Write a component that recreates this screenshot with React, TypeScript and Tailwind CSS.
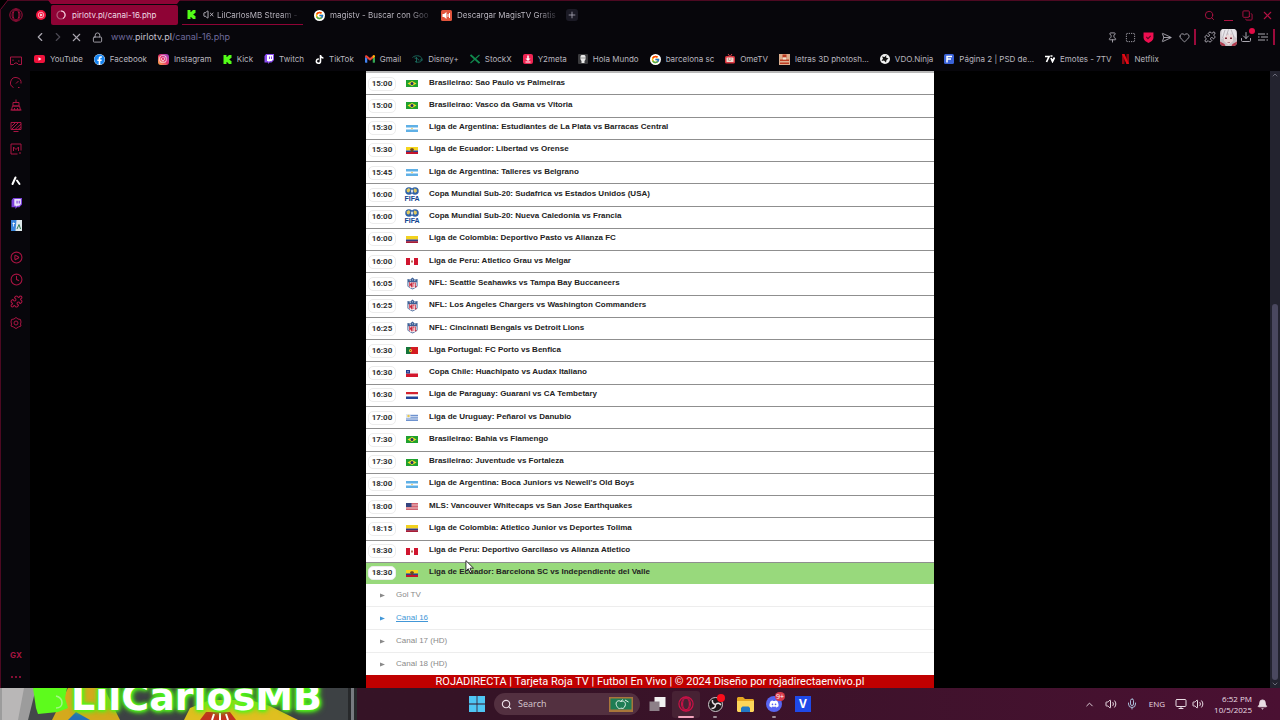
import type { ReactNode } from 'react';
import {
  Bell,
  ChevronDown,
  ChevronLeft,
  ChevronRight,
  ChevronUp,
  CirclePlay,
  Clock,
  Copy,
  Download,
  Heart,
  Lock,
  Mic,
  Monitor,
  Pin,
  Plus,
  Puzzle,
  Search,
  SendHorizontal,
  SquareDashed,
  Volume2,
  VolumeX,
  X,
} from 'lucide-react';
import { FaDiscord, FaFacebook, FaInstagram, FaTiktok, FaTwitch } from 'react-icons/fa';
import { FcGoogle } from 'react-icons/fc';

const MATCHES = [
  { time: '15:00', flag: 'br', title: 'Brasileirao: Sao Paulo vs Palmeiras' },
  { time: '15:00', flag: 'br', title: 'Brasileirao: Vasco da Gama vs Vitoria' },
  { time: '15:30', flag: 'ar', title: 'Liga de Argentina: Estudiantes de La Plata vs Barracas Central' },
  { time: '15:30', flag: 'ec', title: 'Liga de Ecuador: Libertad vs Orense' },
  { time: '15:45', flag: 'ar', title: 'Liga de Argentina: Talleres vs Belgrano' },
  { time: '16:00', flag: 'fifa', title: 'Copa Mundial Sub-20: Sudafrica vs Estados Unidos (USA)' },
  { time: '16:00', flag: 'fifa', title: 'Copa Mundial Sub-20: Nueva Caledonia vs Francia' },
  { time: '16:00', flag: 'co', title: 'Liga de Colombia: Deportivo Pasto vs Alianza FC' },
  { time: '16:00', flag: 'pe', title: 'Liga de Peru: Atletico Grau vs Melgar' },
  { time: '16:05', flag: 'nfl', title: 'NFL: Seattle Seahawks vs Tampa Bay Buccaneers' },
  { time: '16:25', flag: 'nfl', title: 'NFL: Los Angeles Chargers vs Washington Commanders' },
  { time: '16:25', flag: 'nfl', title: 'NFL: Cincinnati Bengals vs Detroit Lions' },
  { time: '16:30', flag: 'pt', title: 'Liga Portugal: FC Porto vs Benfica' },
  { time: '16:30', flag: 'cl', title: 'Copa Chile: Huachipato vs Audax Italiano' },
  { time: '16:30', flag: 'py', title: 'Liga de Paraguay: Guarani vs CA Tembetary' },
  { time: '17:00', flag: 'uy', title: 'Liga de Uruguay: Peñarol vs Danubio' },
  { time: '17:30', flag: 'br', title: 'Brasileirao: Bahia vs Flamengo' },
  { time: '17:30', flag: 'br', title: 'Brasileirao: Juventude vs Fortaleza' },
  { time: '18:00', flag: 'ar', title: "Liga de Argentina: Boca Juniors vs Newell's Old Boys" },
  { time: '18:00', flag: 'us', title: 'MLS: Vancouver Whitecaps vs San Jose Earthquakes' },
  { time: '18:15', flag: 'co', title: 'Liga de Colombia: Atletico Junior vs Deportes Tolima' },
  { time: '18:30', flag: 'pe', title: 'Liga de Peru: Deportivo Garcilaso vs Alianza Atletico' },
  { time: '18:30', flag: 'ec', title: 'Liga de Ecuador: Barcelona SC vs Independiente del Valle', isOpen: true },
];

const CHANNELS = [
  { name: 'Gol TV' },
  { name: 'Canal 16', isHovered: true },
  { name: 'Canal 17 (HD)' },
  { name: 'Canal 18 (HD)' },
];

const FLAGS: Record<string, ReactNode> = {
  br: (
    <>
      <path fill="#1fa12e" d="M0 0h24v14H0z" />
      <path fill="#f4e02a" d="M12 2l9 5-9 5-9-5z" />
      <circle cx="12" cy="7" r="3" fill="#1c2f6b" />
    </>
  ),
  ar: (
    <>
      <path fill="#5fb0e6" d="M0 0h24v14H0z" />
      <path fill="#fff" d="M0 5h24v4H0z" />
      <circle cx="12" cy="7" r="1.6" fill="#e8c65a" />
    </>
  ),
  ec: (
    <>
      <path fill="#f5d51d" d="M0 0h24v7H0z" />
      <path fill="#2b3f8f" d="M0 7h24v4H0z" />
      <path fill="#c4142c" d="M0 10h24v4H0z" />
      <path fill="#6b4a22" d="M8 4l4-2 4 2-2 6h-4z" />
    </>
  ),
  co: (
    <>
      <path fill="#f2d21f" d="M0 0h24v7H0z" />
      <path fill="#343a7d" d="M0 7h24v4H0z" />
      <path fill="#a81c36" d="M0 10.5h24V14H0z" />
    </>
  ),
  pe: (
    <>
      <path fill="#fff" d="M0 0h24v14H0z" />
      <path fill="#d0152f" d="M0 0h8v14H0zM16 0h8v14h-8z" />
      <path fill="#b9705a" d="M10 5h4v4h-4z" />
    </>
  ),
  pt: (
    <>
      <path fill="#d41b22" d="M0 0h24v14H0z" />
      <path fill="#15753a" d="M0 0h9v14H0z" />
      <circle cx="9" cy="7" r="3" fill="#ecd03a" />
      <path fill="#d41b22" d="M8 6h2v2H8z" />
    </>
  ),
  cl: (
    <>
      <path fill="#f4f4f6" d="M0 0h24v7H0z" />
      <path fill="#d3172d" d="M0 7h24v7H0z" />
      <path fill="#1e3c93" d="M0 0h8v7H0z" />
      <path fill="#fff" d="M3 2.5h2v2H3z" />
    </>
  ),
  py: (
    <>
      <path fill="#d22330" d="M0 0h24v5H0z" />
      <path fill="#fff" d="M0 5h24v4H0z" />
      <path fill="#23479b" d="M0 9h24v5H0z" />
    </>
  ),
  uy: (
    <>
      <path fill="#dfe7f5" d="M0 0h24v14H0z" />
      <path stroke="#6d92cf" strokeWidth="2" d="M9 3h15M9 6.5h15M0 10h24M0 13h24" />
      <circle cx="5" cy="4" r="2.4" fill="#e9c84a" />
    </>
  ),
  us: (
    <>
      <path fill="#eec3c8" d="M0 0h24v14H0z" />
      <path stroke="#c43a4b" strokeWidth="1.4" d="M0 1h24M0 4h24M0 7h24M0 10h24M0 13h24" />
      <path fill="#33447f" d="M0 0h11v8H0z" />
    </>
  ),
};

function Flag({ code }: { code: string }) {
  if (code === 'fifa') {
    return (
      <svg viewBox="0 0 28 28" className="size-[14px] overflow-visible">
        <circle cx="8" cy="8" r="7.5" fill="#2f62a8" />
        <circle cx="20" cy="8" r="7.5" fill="#2f62a8" />
        <path fill="#dfc860" d="M3 5l5-3 3 4-3 5-4-1zM18 3l5 1 1 5-4 3-3-4z" />
        <path fill="#fff" d="M12 8l2-4 2 4-2 5z" />
        <text x="14" y="28" textAnchor="middle" fontSize="14" fontWeight="900" fill="#0f4590">
          FIFA
        </text>
      </svg>
    );
  }
  if (code === 'nfl') {
    return (
      <svg viewBox="0 0 24 28" className="h-[13px] w-[11px]">
        <path fill="#3d6096" d="M1 4l6 1 5-4 5 4 6-1v16l-5 4-6 3-6-3-5-4z" />
        <path fill="#fff" d="M3 11h18v9l-4 3-5 2-5-2-4-3z" />
        <path fill="#fff" d="M6 6h2v2H6zM11 5h2v2h-2zM16 6h2v2h-2z" />
        <path stroke="#c8273c" strokeWidth="2.2" fill="none" d="M6 21v-8l4 7v-8M13 22v-9h3M18 12v9h3" />
      </svg>
    );
  }
  return (
    <svg viewBox="0 0 24 14" preserveAspectRatio="none" className="mt-[2px] h-[7px] w-[12px]">
      {FLAGS[code]}
    </svg>
  );
}

function KickIcon() {
  return (
    <svg viewBox="0 0 18 18" className="size-[9px] shrink-0" fill="#53fc18">
      <path d="M1 0h6v4h2V2h2V0h6v6h-2v2h-2v2h2v2h2v6h-6v-2H9v-2H7v4H1z" />
    </svg>
  );
}

function OperaIcon({ className }: { className?: string }) {
  return (
    <svg viewBox="0 0 28 28" className={className} fill="none" stroke="currentColor">
      <circle cx="14" cy="14" r="12.4" strokeWidth="2" />
      <ellipse cx="14" cy="14" rx="6" ry="10" strokeWidth="2" />
      <path strokeWidth="1.6" d="M14 1.6c-5 2-8 7-8 12.4s3 10.4 8 12.4M14 1.6c5 2 8 7 8 12.4s-3 10.4-8 12.4" />
    </svg>
  );
}

const BOOKMARKS: { label: string; icon: ReactNode }[] = [
  {
    label: 'YouTube',
    icon: (
      <svg viewBox="0 0 22 16" className="h-[8px] w-[11px]">
        <rect width="22" height="16" rx="4" fill="#f0123c" />
        <path fill="#fff" d="M9 4.5l6 3.5-6 3.5z" />
      </svg>
    ),
  },
  { label: 'Facebook', icon: <FaFacebook className="size-[11px] rounded-full bg-white text-[#1583f0]" /> },
  {
    label: 'Instagram',
    icon: (
      <span className="flex size-[11px] items-center justify-center rounded-[3px] bg-linear-to-tr from-[#fdb03c] via-[#e52d6a] to-[#9436c9]">
        <FaInstagram className="size-[8px] text-white" />
      </span>
    ),
  },
  { label: 'Kick', icon: <KickIcon /> },
  {
    label: 'Twitch',
    icon: (
      <svg viewBox="0 0 20 20" className="size-[10px]">
        <path fill="#8b4df0" d="M4 0h16v12l-5 5h-4l-3 3v-3H1V4z" />
        <path fill="#fff" d="M6 2h12v9l-3 3h-3l-3 2v-2H6z" />
        <path stroke="#8b4df0" strokeWidth="2" d="M11 5v5M15 5v5" />
      </svg>
    ),
  },
  { label: 'TikTok', icon: <FaTiktok className="size-[9px] text-white" /> },
  {
    label: 'Gmail',
    icon: (
      <svg viewBox="0 0 22 16" className="h-[8px] w-[10px]">
        <path fill="#4285f4" d="M0 3l5 4v9H1l-1-1z" />
        <path fill="#34a853" d="M17 7l5-4v12l-1 1h-4z" />
        <path fill="#ea4335" d="M0 3C0 0 3-1 5 1l6 5 6-5c2-2 5-1 5 2L11 12z" />
        <path fill="#fbbc04" d="M17 1c2-2 5-1 5 2l-5 4z" />
      </svg>
    ),
  },
  {
    label: 'Disney+',
    icon: (
      <svg viewBox="0 0 22 18" className="h-[9px] w-[11px]" fill="none" stroke="#1c6f62" strokeWidth="1.8">
        <path d="M1 5C6 0 18 0 20 8c1 6-8 8-14 5M5 6c5 1 9 2 9 5M9 4v11M16 10h5" />
      </svg>
    ),
  },
  {
    label: 'StockX',
    icon: (
      <svg viewBox="0 0 20 20" className="size-[10px]" stroke="#118a4e" strokeWidth="3.6">
        <path d="M1 2l18 16" />
        <path strokeWidth="2.4" d="M19 2L1 18" />
      </svg>
    ),
  },
  {
    label: 'Y2meta',
    icon: (
      <svg viewBox="0 0 20 20" className="size-[10px]">
        <rect width="20" height="20" rx="4" fill="#ef2452" />
        <path fill="#fff" d="M8.5 3h3v6H15l-5 5-5-5h3.5zM5 15h10v2H5z" />
      </svg>
    ),
  },
  {
    label: 'Hola Mundo',
    icon: (
      <svg viewBox="0 0 20 20" className="size-[10px]">
        <rect width="20" height="20" rx="2" fill="#3a3a3d" />
        <path fill="#e8e8e8" d="M5 4l2-2h6l2 2v7l-2 3v4H7v-4l-2-3z" />
        <path fill="#444" d="M7 7h2v2H7zM11 7h2v2h-2z" />
      </svg>
    ),
  },
  { label: 'barcelona sc', icon: <FcGoogle className="size-[11px] rounded-full bg-white p-px" /> },
  {
    label: 'OmeTV',
    icon: (
      <svg viewBox="0 0 20 20" className="size-[10px]">
        <path stroke="#d8444c" strokeWidth="2" d="M6 0l4 5 4-5" fill="none" />
        <rect y="4" width="20" height="15" rx="3" fill="#d8343e" />
        <rect x="3" y="7" width="14" height="9" rx="1" fill="#f1d9cf" />
        <path fill="#8c6a58" d="M6 9h2v2H6zM11 9h2v2h-2zM7 13h5v1H7z" />
      </svg>
    ),
  },
  {
    label: 'letras 3D photosh...',
    icon: (
      <svg viewBox="0 0 22 22" className="size-[11px]">
        <path fill="#dcae8e" d="M0 0h22v22H0z" />
        <path fill="#bd3b22" d="M7 1h8v6H7zM2 11h18v3H2zM2 17h18v3H2z" />
        <path fill="#f2e3d2" d="M8 7h6v4H8z" />
      </svg>
    ),
  },
  {
    label: 'VDO.Ninja',
    icon: (
      <svg viewBox="0 0 20 20" className="size-[10px]">
        <circle cx="10" cy="10" r="10" fill="#f2f2f2" />
        <path fill="#111" d="M13 2l-1 5 5 2-4 3-1 5-4-4-5 1 3-5-2-4 5 1z" />
      </svg>
    ),
  },
  {
    label: 'Página 2 | PSD de...',
    icon: (
      <svg viewBox="0 0 20 20" className="size-[10px]">
        <rect width="20" height="20" rx="3" fill="#3a62d8" />
        <path stroke="#fff" strokeWidth="3" fill="none" d="M6 17V5h10M6 10h8" />
      </svg>
    ),
  },
  {
    label: 'Emotes - 7TV',
    icon: (
      <svg viewBox="0 0 20 16" className="h-[8px] w-[10px]" fill="none" stroke="#fff" strokeWidth="3.4">
        <path d="M0 3h8L3 14M12 6l3 7 4-8M11 2h4" />
      </svg>
    ),
  },
  {
    label: 'Netflix',
    icon: (
      <svg viewBox="0 0 14 20" className="h-[10px] w-[7px]">
        <path fill="#8f0710" d="M0 0h5v20H0zM9 0h5v20H9z" />
        <path fill="#e50914" d="M0 0h5l9 20H9z" />
      </svg>
    ),
  },
];

/* GX corner panel icons */
function SideIcon({ name }: { name: string }) {
  return (
    <svg viewBox="0 0 24 24" className="size-[12px]" fill="none" stroke="currentColor" strokeWidth="2">
      {name === 'corner' && <path d="M1 4h22v15h-6l-3-3h-4l-3 3H1zM6 9v3M16 12h3" />}
      {name === 'speed' && <path d="M7 21A10.5 10.5 0 1 1 22 13M12 13l5-5M16 21h3" />}
      {name === 'cleaner' && <path d="M12 1v5M6 7h12v7H6zM3 22l2-8h14l2 8zM1 22h22M9 18v4M15 18v4" />}
      {name === 'mods' && <path d="M2 3h20v14H2zM7 21h10M3 11l8-8M4 16L17 3M10 17L22 6M16 17l6-5" />}
      {name === 'market' && <path d="M15 22H2V2h20v13M7 16V8l5 5 5-5v8M18 20h4" />}
      {name === 'settings' && (
        <>
          <path d="M12 1l4 3 5 1 1 5-1 4 1 4-5 2-5 3-5-3-5-2 1-4-1-4 1-5 5-1z" />
          <circle cx="12" cy="12" r="4" />
        </>
      )}
    </svg>
  );
}

const SIDE_TOOLS = [
  { label: 'GX Corner', icon: <SideIcon name="corner" /> },
  { label: 'GX Control', icon: <SideIcon name="speed" /> },
  { label: 'GX Cleaner', icon: <SideIcon name="cleaner" /> },
  { label: 'Mods', icon: <SideIcon name="mods" /> },
  { label: 'Market', icon: <SideIcon name="market" /> },
];

const SIDE_APPS = [
  {
    label: 'Aria',
    icon: (
      <svg viewBox="0 0 20 20" className="size-[10px]" stroke="#fff" strokeWidth="4" strokeLinecap="round">
        <path d="M9 3L3 16M12 9l5 7" />
      </svg>
    ),
  },
  {
    label: 'Twitch',
    icon: (
      <svg viewBox="0 0 20 20" className="size-[11px]">
        <path fill="#7c40dc" d="M4 0h16v12l-5 5h-4l-3 3v-3H1V4z" />
        <path fill="#e9e0fa" d="M6 2h12v9l-3 3h-3l-3 2v-2H6z" />
        <path stroke="#7c40dc" strokeWidth="2" d="M11 5v5M15 5v5" />
      </svg>
    ),
  },
  {
    label: 'Translate',
    icon: (
      <svg viewBox="0 0 22 22" className="size-[11px]">
        <path fill="#3b86dc" d="M0 0h12v22H0z" />
        <path fill="#dfe9ee" d="M11 0h11v22H9z" />
        <path stroke="#fff" strokeWidth="1.6" fill="none" d="M3 7h5M5 5v8" />
        <path stroke="#2d7a52" strokeWidth="2" fill="none" d="M12 18l4-9 3 9" />
      </svg>
    ),
  },
];

const SIDE_LINKS = [
  { label: 'Player', icon: <CirclePlay size={13} strokeWidth={2} /> },
  { label: 'History', icon: <Clock size={13} strokeWidth={2} /> },
  { label: 'Extensions', icon: <Puzzle size={13} strokeWidth={2} /> },
  { label: 'Settings', icon: <SideIcon name="settings" /> },
];

function SideGroup({ items }: { items: { label: string; icon: ReactNode }[] }) {
  return (
    <div className="flex flex-col">
      {items.map((item) => (
        <button key={item.label} type="button" aria-label={item.label} className="flex h-[22px] items-center justify-center">
          {item.icon}
        </button>
      ))}
    </div>
  );
}

function TabBar() {
  return (
    <div className="relative flex h-[26px] items-center">
      <svg viewBox="0 0 132 4" className="absolute left-[48px] top-0 h-[4px] w-[132px]">
        <path fill="#8e0335" d="M0 0h132l-3 4H3z" />
      </svg>
      <div className="flex w-[30px] justify-center pl-[2px] pt-[4px] text-[#a30f3d]">
        <OperaIcon className="size-[14px]" />
      </div>
      <button type="button" aria-label="YouTube Music" className="flex w-[21px] justify-center pt-[4px]">
        <svg viewBox="0 0 20 20" className="size-[10px]">
          <circle cx="10" cy="10" r="10" fill="#f3133d" />
          <circle cx="10" cy="10" r="5.5" fill="none" stroke="#fff" strokeWidth="1.2" />
          <path fill="#fff" d="M8.5 7l5 3-5 3z" />
        </svg>
      </button>
      <div className="flex min-w-0 items-center gap-[4px] pt-[4px] text-[8px] leading-[12px] text-[#c3bfc9]">
        <button type="button" className="flex h-[20px] w-[127px] items-center gap-[6px] rounded-[2px] bg-[#8e0335] px-[5px] text-[#f0dbe4]">
          <svg viewBox="0 0 20 20" className="size-[10px]" fill="none" strokeWidth="2.4">
            <circle cx="10" cy="10" r="8" stroke="#b35a7c" />
            <path d="M10 2a8 8 0 0 1 4 15" stroke="#f2c6d6" />
          </svg>
          pirlotv.pl/canal-16.php
        </button>
        <button type="button" className="flex h-[20px] w-[121px] items-center border-b border-[#8e0335] px-[5px]">
          <KickIcon />
          <VolumeX size={11} strokeWidth={2} className="ml-[7px] mr-[3px] shrink-0" />
          <span className="whitespace-nowrap bg-linear-to-r from-[#c3bfc9] from-80% to-[#33323a] bg-clip-text text-transparent">
            LilCarlosMB Stream -
          </span>
        </button>
        <button type="button" className="flex h-[20px] w-[124px] items-center gap-[5px] pl-[7px]">
          <FcGoogle className="size-[11px] shrink-0 rounded-full bg-white p-px" />
          <span className="whitespace-nowrap bg-linear-to-r from-[#c3bfc9] from-80% to-[#33323a] bg-clip-text text-transparent">
            magistv - Buscar con Goo
          </span>
        </button>
        <button type="button" className="flex h-[20px] w-[127px] items-center gap-[5px] pl-[6px]">
          <svg viewBox="0 0 22 22" className="size-[11px] shrink-0">
            <rect width="22" height="22" rx="3" fill="#e2543c" />
            <path fill="#fff" d="M3 8h3l5-4v14l-5-4H3zM13 8h2v6h-2zM16 6h2v10h-2z" />
          </svg>
          <span className="whitespace-nowrap bg-linear-to-r from-[#c3bfc9] from-80% to-[#33323a] bg-clip-text text-transparent">
            Descargar MagisTV Gratis
          </span>
        </button>
        <button type="button" aria-label="New tab" className="rounded-[3px] bg-[#1b1a25] p-px text-[#a9a6b4]">
          <Plus size={10} />
        </button>
      </div>
      <div className="ml-auto flex items-center gap-[8px] pr-[6px] pt-[4px] text-[#b01243]">
        <button type="button" aria-label="Search tabs">
          <Search size={11} />
        </button>
        <button type="button" aria-label="Minimize" className="flex h-[11px] w-[11px] items-end px-px">
          <span className="h-px w-full bg-[#b01243]" />
        </button>
        <button type="button" aria-label="Restore">
          <Copy size={11} className="-scale-x-100 rotate-90" />
        </button>
        <button type="button" aria-label="Close">
          <X size={13} />
        </button>
      </div>
    </div>
  );
}

function AddressBar() {
  return (
    <div className="flex h-[22px] items-center pl-[33px] text-[#aaa7b0]">
      <button type="button" aria-label="Back" className="flex w-[14px] justify-center">
        <ChevronLeft size={14} />
      </button>
      <button type="button" aria-label="Forward" className="ml-[4px] flex w-[14px] justify-center text-[#4b4953]">
        <ChevronRight size={14} />
      </button>
      <button type="button" aria-label="Stop" className="ml-[4px] flex w-[14px] justify-center">
        <X size={13} />
      </button>
      <Lock size={11} className="ml-[9px]" />
      <a href="#url" className="ml-[8px] text-[9px] leading-[12px] text-[#6f6a9c]">
        www.<span className="text-[#c6c3cf]">pirlotv.pl</span>/canal-16.php
      </a>
      <div className="ml-auto flex items-center">
        <div className="flex items-center gap-[7px]">
          <Pin size={11} />
          <SquareDashed size={11} />
          <svg viewBox="0 0 20 20" className="size-[11px]">
            <path fill="#ee0e50" d="M1 1h18v10c0 4-5 7-9 9-4-2-9-5-9-9z" />
            <path stroke="#55061f" strokeWidth="2" fill="none" d="M6 9l3 3 5-5" />
          </svg>
          <SendHorizontal size={11} />
          <Heart size={11} />
        </div>
        <span className="ml-[4px] h-[16px] w-[2px] bg-[#9b0a3b]" />
        <Puzzle size={12} className="ml-[8px]" />
        <svg viewBox="0 0 34 34" className="ml-[4px] size-[17px] rounded-[4px]">
          <path fill="#c9c3c8" d="M0 0h34v34H0z" />
          <path fill="#ecd9d9" d="M8 11h18v13l-9 8-9-8z" />
          <path fill="#e8e6ea" d="M3 0h28l2 18-7-4-4-6-3 7-3-8-5 8-8 5z" />
          <path stroke="#8f878f" strokeWidth="1" fill="none" d="M10 2L5 18M17 1l-4 12M22 1l6 15" />
          <path fill="#7a2c3c" d="M10 17h4v3h-4zM20 17h4v3h-4zM15 26h5v1h-5z" />
          <path fill="#b23b4e" d="M0 25l9 5 2 4H0zM34 25l-9 5-2 4h11z" />
        </svg>
        <span className="relative ml-[3px]">
          <Download size={12} />
          <span className="absolute -right-[3px] -top-[3px] size-[6px] rounded-full bg-[#e20c46]" />
        </span>
        <svg viewBox="0 0 20 20" className="ml-[6px] size-[10px]" stroke="currentColor" strokeWidth="2">
          <path d="M0 4h14M17 4h3M0 10h3M6 10h14M0 16h14M17 16h3" />
        </svg>
        <span className="ml-[5px] mr-[5px] h-[16px] w-[2px] bg-[#9b0a3b]" />
      </div>
    </div>
  );
}

function MatchList() {
  return (
    <ul className="flex flex-1 flex-col border-t-2 border-[#b9b9b9]">
      {MATCHES.map((match, i) => (
        <li
          key={i}
          className={`flex min-h-0 flex-1 ${match.isOpen ? 'bg-[#98d97c]' : 'border-b border-[#8f8f8f] bg-white'}`}
        >
          <a href="#match" className="flex flex-1 items-center pb-[2px]">
            <span className="ml-[2px] mt-[2px] w-[28px] rounded-[5px] border border-[#ececec] bg-white text-center font-[Roboto,sans-serif] text-[8px] font-bold leading-[12px] text-[#333]">
              {match.time}
            </span>
            <span className="ml-[8px] flex w-[16px] justify-center">
              <Flag code={match.flag} />
            </span>
            <span className="ml-[9px] text-[8px] font-bold leading-[12px] text-[#222]">{match.title}</span>
          </a>
        </li>
      ))}
    </ul>
  );
}

function ChannelList() {
  return (
    <ul className="bg-white">
      {CHANNELS.map((channel) => (
        <li key={channel.name} className="border-b border-[#ededed] last:border-b-0">
          <a
            href="#channel"
            className={`flex h-[22px] items-center text-[8px] ${channel.isHovered ? 'text-[#4297d7]' : 'text-[#8a8a8a]'}`}
          >
            <svg viewBox="0 0 10 10" className="ml-[14px] mr-[11px] size-[5px]" fill="currentColor">
              <path d="M0 1l10 4-10 4z" />
            </svg>
            <span className={channel.isHovered ? 'underline' : ''}>{channel.name}</span>
          </a>
        </li>
      ))}
    </ul>
  );
}

/* stream overlay that covers the left part of the taskbar */
function StreamOverlay() {
  return (
    <div className="relative w-[357px] shrink-0 overflow-hidden bg-[#44484a]">
      <svg viewBox="0 0 357 32" preserveAspectRatio="none" className="absolute inset-0 size-full">
        <path fill="#9c9c9c" d="M0 0h36l-8 32H0z" />
        <path fill="#b9b7b7" d="M2 0h22l-6 32H2z" />
        <path fill="#3d4144" d="M120 0h237v32H120z" />
        <path fill="#d4a91d" d="M52 32l6-12 10-20h36l16 32z" />
        <path fill="#246fb8" d="M68 32l8-8 14 8z" />
        <path fill="#e0bf20" d="M184 32l6-12 20-8h40l20 6 28 14z" />
        <path fill="#c2331f" d="M200 32l6-8h24l6 8z" />
        <path stroke="#fff" strokeWidth="2" d="M212 32l2-6M220 32v-7M228 32l-2-6" />
        <path fill="#27292b" d="M348 0h9v32h-9z" />
        <path fill="#777b80" d="M351 0h3v32h-3z" />
        <path fill="#5dfb1c" d="M33 0h34l-2 10 3 10-10 4-20 2-2-6z" />
        <path stroke="#a5f786" strokeWidth="1.5" fill="none" d="M56 8c8 2 8 12 0 12" />
      </svg>
      <span className="absolute left-[71px] top-[-10px] whitespace-nowrap font-[DejaVu_Sans,sans-serif] text-[38px] font-bold leading-[38px] text-white [text-shadow:0_0_3px_#50f51a,0_0_4px_#50f51a,0_0_5px_#50f51a,1px_1px_6px_#50f51a]">
        LilCarlosMB
      </span>
    </div>
  );
}

function Taskbar() {
  return (
    <footer className="flex h-[32px] bg-linear-to-r from-[#351326] from-40% to-[#4a1032] font-[Open_Sans,sans-serif] text-[#e9dde4]">
      <StreamOverlay />
      <div className="flex flex-1 items-center pl-[112px]">
        <button type="button" aria-label="Start">
          <svg viewBox="0 0 16 16" className="size-[16px]">
            <path fill="#4fc6f4" d="M0 0h7.6v7.6H0zM8.4 0H16v7.6H8.4zM0 8.4h7.6V16H0zM8.4 8.4H16V16H8.4z" />
          </svg>
        </button>
        <label className="ml-[9px] flex h-[22px] w-[146px] items-center rounded-full bg-[#533040] pl-[7px] pr-[7px]">
          <Search size={11} strokeWidth={2.5} className="shrink-0" />
          <input
            type="text"
            placeholder="Search"
            aria-label="Search"
            className="ml-[6px] w-full min-w-0 bg-transparent text-[9px] leading-[14px] outline-none placeholder:text-[#d6c9d0]"
          />
          <svg viewBox="0 0 48 30" className="h-[15px] w-[24px] shrink-0">
            <path fill="#a9753a" d="M0 0h48v30H0z" />
            <path fill="#1f7d54" d="M3 3h42v22H3z" />
            <path stroke="#e4f2ea" strokeWidth="2" fill="none" d="M24 9c-6-4-12 1-9 8s7 7 9 5c3 2 6 1 8-4 3-7-3-12-8-9zM24 9l3-4M32 6l7 4" />
          </svg>
        </label>
        <div className="ml-[2px] flex items-center">
          <button type="button" aria-label="Task view" className="flex w-[30px] justify-center">
            <svg viewBox="0 0 34 30" className="h-[15px] w-[17px]">
              <path fill="#f1f1f1" d="M11 0h22v20H11z" />
              <path fill="#8d8088" d="M1 9h20v19H1z" />
            </svg>
          </button>
          <button type="button" aria-label="Opera GX" className="relative flex h-[27px] w-[28px] items-center justify-center rounded-[3px] bg-[#472234] text-[#d01047]">
            <OperaIcon className="size-[16px]" />
            <span className="absolute bottom-0 left-[6px] h-[2px] w-[16px] rounded-full bg-[#f3a5bd]" />
          </button>
          <button type="button" aria-label="OBS Studio" className="relative flex h-[27px] w-[30px] items-center justify-center">
            <svg viewBox="0 0 30 30" className="size-[15px]">
              <circle cx="15" cy="15" r="14" fill="#1c171b" stroke="#cfc7cb" strokeWidth="2" />
              <path stroke="#e5dfe2" strokeWidth="3" fill="none" d="M9 6c-1 5 2 8 6 9 4-4 8-3 11 1M15 15c0 5-3 8-8 8" />
            </svg>
            <span className="absolute left-[17px] top-[3px] size-[8px] rounded-full bg-[#fb0d1b]" />
            <span className="absolute bottom-0 left-[13px] h-[2px] w-[4px] rounded-full bg-[#9f8d97]" />
          </button>
          <button type="button" aria-label="File Explorer" className="flex w-[30px] justify-center">
            <svg viewBox="0 0 34 30" className="h-[15px] w-[17px]">
              <path fill="#e5a621" d="M0 2l2-2h10l4 4h16l2 2v12H0z" />
              <path fill="#fcd55a" d="M0 8h34v20l-2 2H2l-2-2z" />
              <path fill="#2278c4" d="M8 30V22l3-3h12l3 3v8z" />
            </svg>
          </button>
          <button type="button" aria-label="Discord" className="relative flex h-[27px] w-[28px] items-center justify-center">
            <span className="flex size-[16px] items-center justify-center rounded-full bg-[#5865f2]">
              <FaDiscord size={10} color="#fff" />
            </span>
            <span className="absolute left-[15px] top-[1px] rounded-full bg-[#d83a4a] px-px text-[7px] leading-[9px] text-white">9+</span>
            <span className="absolute bottom-0 left-[12px] h-[2px] w-[4px] rounded-full bg-[#9f8d97]" />
          </button>
          <button type="button" aria-label="V" className="flex w-[30px] justify-center">
            <span className="size-[16px] bg-[#1f49e8] text-center text-[12px] font-bold leading-[16px] text-white">V</span>
          </button>
        </div>
        <div className="ml-auto flex items-center pr-[12px]">
          <ChevronUp size={11} />
          <Volume2 size={12} className="ml-[10px]" />
          <Mic size={12} className="ml-[9px] text-[#a9bcd6]" />
          <span className="ml-[11px] text-[8px] leading-[12px]">ENG</span>
          <Monitor size={12} className="ml-[10px]" />
          <Volume2 size={12} className="ml-[5px]" />
          <div className="ml-[10px] text-right text-[8px] leading-[11px]">
            <div>6:52 PM</div>
            <div>10/5/2025</div>
          </div>
          <Bell size={11} fill="currentColor" className="ml-[5px]" />
        </div>
      </div>
    </footer>
  );
}

function App() {
  return (
    <div className="flex h-screen flex-col overflow-hidden bg-black font-[Liberation_Sans,sans-serif]">
      <div className="relative flex min-h-0 flex-1 flex-col bg-[#07060b] font-[Inter,sans-serif]">
        <header className="border-t border-[#4d0922]">
          <div className="-mt-px">
            <TabBar />
            <AddressBar />
          </div>
        </header>
        <div className="flex min-h-0 flex-1">
          <aside className="flex w-[30px] shrink-0 flex-col pl-[2px] pt-[2px] text-[#a81442]">
            <SideGroup items={SIDE_TOOLS} />
            <div className="mt-[10px]">
              <SideGroup items={SIDE_APPS} />
            </div>
            <div className="mt-[10px]">
              <SideGroup items={SIDE_LINKS} />
            </div>
            <div className="mt-auto flex flex-col text-center text-[8px] font-bold leading-[22px]">
              <button type="button">GX</button>
              <button type="button" aria-label="More" className="flex h-[22px] items-center justify-center gap-[2px]">
                <span className="size-[2px] rounded-full bg-[#b01243]" />
                <span className="size-[2px] rounded-full bg-[#b01243]" />
                <span className="size-[2px] rounded-full bg-[#b01243]" />
              </button>
            </div>
          </aside>
          <div className="flex min-w-0 flex-1 flex-col">
            <nav className="flex h-[23px] shrink-0 items-center gap-[11px] overflow-hidden pb-px pl-[4px]">
              {BOOKMARKS.map(({ label, icon }) => (
                <a key={label} href="#bookmark" className="flex items-center gap-[5px] whitespace-nowrap text-[8px] leading-[12px] text-[#b9b6bf]">
                  {icon}
                  {label}
                </a>
              ))}
            </nav>
            <div className="flex min-h-0 flex-1 bg-black">
              <main className="mx-auto flex w-[568px] flex-col font-[Liberation_Sans,sans-serif]">
                <MatchList />
                <ChannelList />
                <div className="bg-[#c00000] text-center font-[Roboto,sans-serif] text-[11px] leading-[13px] text-white">
                  ROJADIRECTA | Tarjeta Roja TV | Futbol En Vivo | © 2024 Diseño por rojadirectaenvivo.pl
                </div>
              </main>
              <div className="flex w-[10px] shrink-0 flex-col items-center justify-between bg-[#23232f] text-[#8c8c9b]">
                <ChevronUp size={8} />
                <div className="mt-auto h-[61%] w-[6px] rounded-full bg-[#4a485f]" />
                <ChevronDown size={8} />
              </div>
            </div>
          </div>
        </div>
        <svg viewBox="0 0 10 10" className="absolute left-0 top-0 size-[10px]">
          <path fill="#000" d="M0 0h8L0 9z" />
          <path stroke="#6d0a2d" d="M8 0L1 9" />
        </svg>
        <span className="absolute bottom-0 left-0 top-[9px] w-px bg-[#4d0922]" />
      </div>
      <Taskbar />
      <svg viewBox="0 0 16 24" className="absolute left-[465px] top-[560px] h-[14px] w-[10px]">
        <path fill="#fff" stroke="#222" strokeWidth="1.6" d="M1 1v18l4-4 3 7 3-1-3-7h6z" />
      </svg>
    </div>
  );
}

export default App;
